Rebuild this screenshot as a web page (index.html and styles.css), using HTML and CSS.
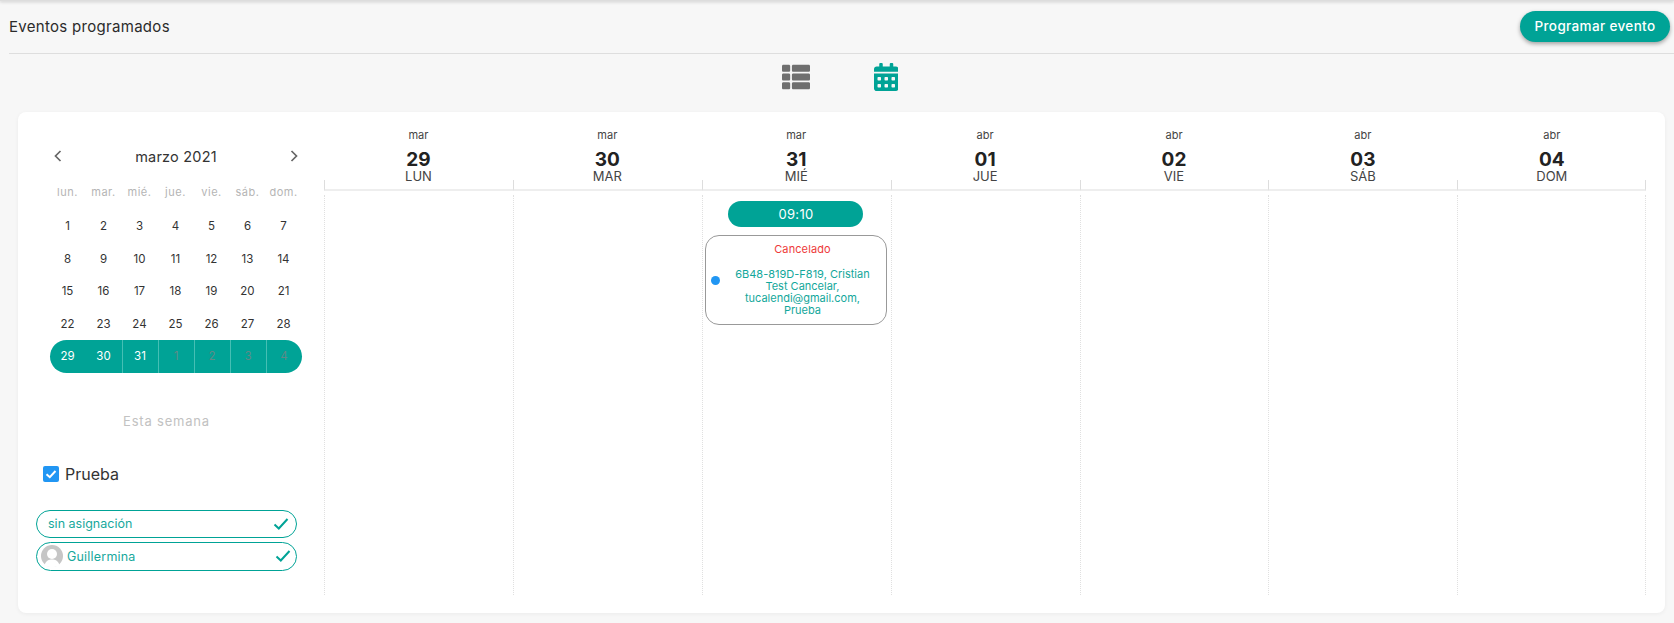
FILE: index.html
```html
<!DOCTYPE html>
<html lang="es">
<head>
    <meta charset="UTF-8">
    <meta name="viewport" content="width=device-width, initial-scale=1.0">
    <title>Eventos programados</title>
    <link rel="stylesheet" href="styles.css">
</head>
<body>
    <div class="top-edge"></div>

    <header class="page-header">
        <h1 class="page-title">Eventos programados</h1>
        <button class="btn-primary">Programar evento</button>
    </header>

    <div class="view-switch">
        <svg class="icon-list" viewBox="0 0 512 512"><path d="M149.333 216v80c0 13.255-10.745 24-24 24H24c-13.255 0-24-10.745-24-24v-80c0-13.255 10.745-24 24-24h101.333c13.255 0 24 10.745 24 24zM0 376v80c0 13.255 10.745 24 24 24h101.333c13.255 0 24-10.745 24-24v-80c0-13.255-10.745-24-24-24H24c-13.255 0-24 10.745-24 24zM125.333 32H24C10.745 32 0 42.745 0 56v80c0 13.255 10.745 24 24 24h101.333c13.255 0 24-10.745 24-24V56c0-13.255-10.745-24-24-24zm80 448H488c13.255 0 24-10.745 24-24v-80c0-13.255-10.745-24-24-24H205.333c-13.255 0-24 10.745-24 24v80c0 13.255 10.745 24 24 24zm-24-424v80c0 13.255 10.745 24 24 24H488c13.255 0 24-10.745 24-24V56c0-13.255-10.745-24-24-24H205.333c-13.255 0-24 10.745-24 24zm24 264H488c13.255 0 24-10.745 24-24v-80c0-13.255-10.745-24-24-24H205.333c-13.255 0-24 10.745-24 24v80c0 13.255 10.745 24 24 24z"/></svg>
        <svg class="icon-calendar" viewBox="0 0 448 512"><path d="M0 464c0 26.5 21.5 48 48 48h352c26.5 0 48-21.5 48-48V192H0v272zm320-196c0-6.6 5.4-12 12-12h40c6.6 0 12 5.4 12 12v40c0 6.6-5.4 12-12 12h-40c-6.6 0-12-5.4-12-12v-40zm0 128c0-6.6 5.4-12 12-12h40c6.6 0 12 5.4 12 12v40c0 6.6-5.4 12-12 12h-40c-6.6 0-12-5.4-12-12v-40zM192 268c0-6.6 5.4-12 12-12h40c6.6 0 12 5.4 12 12v40c0 6.6-5.4 12-12 12h-40c-6.6 0-12-5.4-12-12v-40zm0 128c0-6.6 5.4-12 12-12h40c6.6 0 12 5.4 12 12v40c0 6.6-5.4 12-12 12h-40c-6.6 0-12-5.4-12-12v-40zM64 268c0-6.6 5.4-12 12-12h40c6.6 0 12 5.4 12 12v40c0 6.6-5.4 12-12 12H76c-6.6 0-12-5.4-12-12v-40zm0 128c0-6.6 5.4-12 12-12h40c6.6 0 12 5.4 12 12v40c0 6.6-5.4 12-12 12H76c-6.6 0-12-5.4-12-12v-40zM400 64h-48V16c0-8.8-7.2-16-16-16h-32c-8.8 0-16 7.2-16 16v48H160V16c0-8.8-7.2-16-16-16h-32c-8.8 0-16 7.2-16 16v48H48C21.5 64 0 85.5 0 112v48h448v-48c0-26.5-21.5-48-48-48z"/></svg>
    </div>

    <main class="card">
        <aside class="sidebar">
            <div class="mini-cal">
                <div class="mini-nav">
                    <svg class="chevron" viewBox="0 0 10 14"><path d="M7.5 2 L2.5 7 L7.5 12"/></svg>
                    <span class="mini-month">marzo 2021</span>
                    <svg class="chevron" viewBox="0 0 10 14"><path d="M2.5 2 L7.5 7 L2.5 12"/></svg>
                </div>
                <div class="mini-weekdays">
                    <span>lun.</span><span>mar.</span><span>mié.</span><span>jue.</span><span>vie.</span><span>sáb.</span><span>dom.</span>
                </div>
                <div class="mini-days">
                    <span>1</span><span>2</span><span>3</span><span>4</span><span>5</span><span>6</span><span>7</span>
                    <span>8</span><span>9</span><span>10</span><span>11</span><span>12</span><span>13</span><span>14</span>
                    <span>15</span><span>16</span><span>17</span><span>18</span><span>19</span><span>20</span><span>21</span>
                    <span>22</span><span>23</span><span>24</span><span>25</span><span>26</span><span>27</span><span>28</span>
                    <span class="wk wk-first">29</span><span class="wk">30</span><span class="wk wk-line">31</span>
                    <span class="wk wk-line wk-dim">1</span><span class="wk wk-line wk-dim">2</span><span class="wk wk-line wk-dim">3</span><span class="wk wk-line wk-dim wk-last">4</span>
                </div>
            </div>

            <div class="this-week">Esta semana</div>

            <label class="calendar-check">
                <span class="checkbox"><svg viewBox="0 0 16 16"><path d="M3.5 8.2 L6.8 11.2 L12.5 5"/></svg></span>
                Prueba
            </label>

            <div class="pill">
                <span class="pill-text">sin asignación</span>
                <svg class="pill-check" viewBox="0 0 16 14"><path d="M1.5 7.5 L5.8 11.5 L14.5 2"/></svg>
            </div>
            <div class="pill pill-user">
                <svg class="avatar" viewBox="0 0 22 22"><circle cx="11" cy="11" r="11" fill="#c6c6c6"/><circle cx="11" cy="9" r="5" fill="#fff"/><path d="M3.5 20 C5 15.5 8 14.5 11 14.5 C14 14.5 17 15.5 18.5 20 C16 22 14 22 11 22 C8 22 6 22 3.5 20Z" fill="#fff"/></svg>
                <span class="pill-text">Guillermina</span>
                <svg class="pill-check" viewBox="0 0 16 14"><path d="M1.5 7.5 L5.8 11.5 L14.5 2"/></svg>
            </div>
        </aside>

        <section class="week">
            <div class="week-head">
                <div class="day-head"><span class="day-month">mar</span><span class="day-num">29</span><span class="day-name">LUN</span><div class="day-tick"></div></div>
                <div class="day-head"><span class="day-month">mar</span><span class="day-num">30</span><span class="day-name">MAR</span><div class="day-tick"></div></div>
                <div class="day-head"><span class="day-month">mar</span><span class="day-num">31</span><span class="day-name">MIÉ</span><div class="day-tick"></div></div>
                <div class="day-head"><span class="day-month">abr</span><span class="day-num">01</span><span class="day-name">JUE</span><div class="day-tick"></div></div>
                <div class="day-head"><span class="day-month">abr</span><span class="day-num">02</span><span class="day-name">VIE</span><div class="day-tick"></div></div>
                <div class="day-head"><span class="day-month">abr</span><span class="day-num">03</span><span class="day-name">SÁB</span><div class="day-tick"></div></div>
                <div class="day-head day-head-last"><span class="day-month">abr</span><span class="day-num">04</span><span class="day-name">DOM</span><div class="day-tick"></div></div>
            </div>
            <div class="week-body">
                <div class="day-col"></div>
                <div class="day-col"></div>
                <div class="day-col">
                    <div class="time-pill">09:10</div>
                    <div class="event">
                        <span class="event-dot"></span>
                        <div class="event-status">Cancelado</div>
                        <div class="event-text">6B48-819D-F819, Cristian<br>Test Cancelar,<br>tucalendi@gmail.com,<br>Prueba</div>
                    </div>
                </div>
                <div class="day-col"></div>
                <div class="day-col"></div>
                <div class="day-col"></div>
                <div class="day-col day-col-last"></div>
            </div>
        </section>
    </main>
</body>
</html>
```
FILE: styles.css
```css
body {
    margin: 0;
    background-color: #f7f7f7;
    font-family: Inter, "Noto Sans", sans-serif;
    color: #2b2b2b;
    height: 623px;
    overflow: hidden;
}

.top-edge {
    height: 1px;
    background-color: #ddd;
    box-shadow: 0 1px 3px rgba(0, 0, 0, 0.3);
}

.page-header {
    display: flex;
    align-items: center;
    justify-content: space-between;
    height: 53px;
    margin-left: 9px;
    padding-right: 4px;
    padding-bottom: 2px;
    box-sizing: border-box;
    border-bottom: 1px solid #dedede;
}

.page-title {
    margin: 0;
    font-size: 15px;
    font-weight: 400;
    letter-spacing: 0.3px;
    color: #2b2b2b;
}

.btn-primary {
    width: 150px;
    height: 31px;
    border: none;
    border-radius: 16px;
    background-color: #00a396;
    color: #fff;
    font-family: inherit;
    font-size: 13.5px;
    font-weight: 500;
    letter-spacing: 0.35px;
    box-shadow: 0 2px 4px rgba(0, 0, 0, 0.35);
}

.view-switch {
    display: flex;
    align-items: center;
    justify-content: center;
    gap: 64px;
    height: 58px;
    padding-left: 6px;
    padding-bottom: 12px;
    box-sizing: border-box;
}

.icon-list {
    width: 28px;
    height: 28px;
    fill: #6f6f6f;
}

.icon-calendar {
    width: 24.5px;
    height: 28px;
    fill: #00a396;
}

.card {
    display: flex;
    width: 1647px;
    height: 501px;
    margin-left: 18px;
    background-color: #fff;
    border-radius: 8px;
    box-shadow: 0 1px 4px rgba(0, 0, 0, 0.05);
}

.sidebar {
    width: 306px;
    flex-shrink: 0;
    padding-left: 18px;
    box-sizing: border-box;
}

.mini-cal {
    margin-left: 13.5px;
    width: 253px;
    padding-top: 30px;
}

.mini-nav {
    display: flex;
    align-items: center;
    justify-content: space-between;
    height: 28px;
    padding: 0 3px;
}

.chevron {
    width: 10px;
    height: 14px;
    fill: none;
    stroke: #666;
    stroke-width: 1.7;
}

.mini-month {
    font-size: 14.5px;
    letter-spacing: 0.2px;
    color: #333;
}

.mini-weekdays {
    display: grid;
    grid-template-columns: repeat(7, 36px);
    margin-top: 10px;
    line-height: 24px;
    text-align: center;
    font-size: 11px;
    letter-spacing: 0.5px;
    color: #b5b5b5;
}

.mini-days {
    display: grid;
    grid-template-columns: repeat(7, 36px);
    grid-auto-rows: 32.5px;
    margin-top: 6px;
    font-size: 11.5px;
    color: #333;
}

.mini-days span {
    display: flex;
    align-items: center;
    justify-content: center;
}

.mini-days .wk {
    background-color: #00a396;
    color: #fff;
}

.mini-days .wk-line {
    border-left: 1px solid #45bfb4;
}

.mini-days .wk-dim {
    color: #5f8a87;
}

.mini-days .wk-first {
    border-radius: 17px 0 0 17px;
}

.mini-days .wk-last {
    border-radius: 0 17px 17px 0;
}

.this-week {
    width: 261px;
    margin-top: 38px;
    line-height: 20px;
    text-align: center;
    font-size: 13px;
    letter-spacing: 0.8px;
    color: #c2c2c2;
}

.calendar-check {
    display: flex;
    align-items: center;
    gap: 6px;
    height: 20px;
    margin-top: 33px;
    margin-left: 7px;
    font-size: 16px;
    color: #333;
}

.checkbox {
    width: 16px;
    height: 16px;
    border-radius: 2px;
    background-color: #2196f3;
}

.checkbox svg {
    display: block;
    fill: none;
    stroke: #fff;
    stroke-width: 2;
}

.pill {
    display: flex;
    align-items: center;
    justify-content: space-between;
    width: 261px;
    height: 28px;
    margin-top: 26px;
    padding: 0 7px 0 11px;
    box-sizing: border-box;
    border: 1px solid #00a396;
    border-radius: 15px;
    font-size: 12.5px;
    color: #17a89c;
}

.pill-user {
    height: 29px;
    margin-top: 4px;
    padding-left: 4px;
    padding-right: 5px;
}

.pill-user .pill-text {
    margin-left: 4px;
    margin-right: auto;
    letter-spacing: 0.2px;
}

.avatar {
    width: 22px;
    height: 22px;
}

.pill-check {
    width: 16px;
    height: 14px;
    fill: none;
    stroke: #00a396;
    stroke-width: 2;
}

.week {
    width: 1323px;
    flex-shrink: 0;
}

.week-head {
    display: flex;
    height: 79px;
}

.day-head {
    display: flex;
    flex-direction: column;
    align-items: center;
    width: 188.9px;
    padding-top: 15px;
    box-sizing: border-box;
}

.day-month {
    font-size: 11px;
    line-height: 16px;
    color: #444;
}

.day-num {
    font-size: 19px;
    font-weight: 700;
    line-height: 21px;
    margin-top: 6px;
    color: #222;
}

.day-name {
    font-size: 13px;
    line-height: 12px;
    color: #444;
}

.day-tick {
    align-self: stretch;
    height: 9px;
    margin-top: -2px;
    border-left: 1px solid #ddd;
    border-bottom: 2px solid #eee;
}

.day-head-last .day-tick {
    border-right: 1px solid #ddd;
}

.week-body {
    display: flex;
    height: 400px;
    margin-top: 4px;
}

.day-col {
    display: flex;
    flex-direction: column;
    align-items: center;
    width: 188.9px;
    box-sizing: border-box;
    padding: 6px 1.5px 0 0;
    border-left: 1px dotted #e0e0e0;
}

.day-col-last {
    border-right: 1px dotted #e0e0e0;
}

.time-pill {
    width: 135px;
    height: 26px;
    border-radius: 13px;
    background-color: #00a396;
    color: #fff;
    text-align: center;
    font-size: 13px;
    line-height: 26px;
    letter-spacing: 0.3px;
}

.event {
    position: relative;
    width: 182px;
    height: 90px;
    margin-top: 8px;
    padding: 7px 0 0 13px;
    box-sizing: border-box;
    border: 1px solid #999;
    border-radius: 14px;
    text-align: center;
    font-size: 11px;
    line-height: 12px;
}

.event-dot {
    position: absolute;
    left: 5px;
    top: 40px;
    width: 9px;
    height: 9px;
    border-radius: 50%;
    background-color: #2196f3;
}

.event-status {
    color: #ee3a3a;
    letter-spacing: 0.1px;
}

.event-text {
    margin-top: 13px;
    color: #13a79b;
}
```
